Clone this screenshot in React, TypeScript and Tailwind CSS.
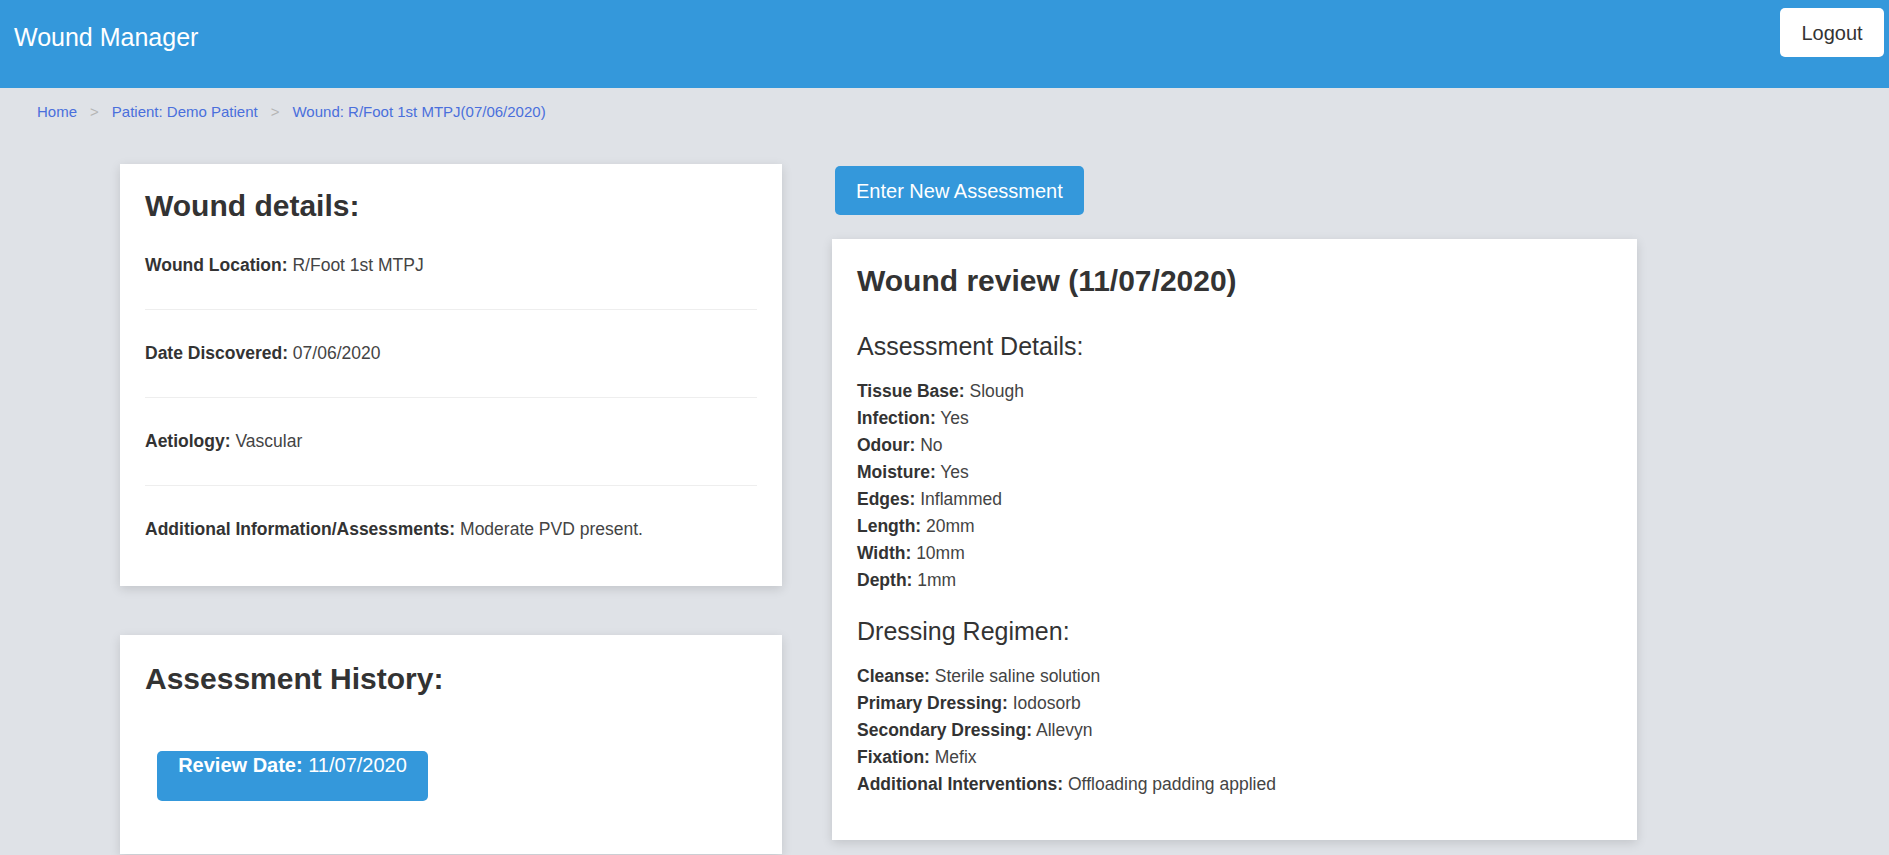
const wound = [
  { label: "Wound Location:", value: "R/Foot 1st MTPJ" },
  { label: "Date Discovered:", value: "07/06/2020" },
  { label: "Aetiology:", value: "Vascular" },
  { label: "Additional Information/Assessments:", value: "Moderate PVD present." },
];

const assessment = [
  { label: "Tissue Base:", value: "Slough" },
  { label: "Infection:", value: "Yes" },
  { label: "Odour:", value: "No" },
  { label: "Moisture:", value: "Yes" },
  { label: "Edges:", value: "Inflammed" },
  { label: "Length:", value: "20mm" },
  { label: "Width:", value: "10mm" },
  { label: "Depth:", value: "1mm" },
];

const dressing = [
  { label: "Cleanse:", value: "Sterile saline solution" },
  { label: "Primary Dressing:", value: "Iodosorb" },
  { label: "Secondary Dressing:", value: "Allevyn" },
  { label: "Fixation:", value: "Mefix" },
  { label: "Additional Interventions:", value: "Offloading padding applied" },
];

const crumbs = ["Home", "Patient: Demo Patient", "Wound: R/Foot 1st MTPJ(07/06/2020)"];

function Field({ label, value }: { label: string; value: string }) {
  return (
    <div>
      <span className="font-bold text-[#333]">{label}</span>{" "}
      <span className="text-[#444]">{value}</span>
    </div>
  );
}

export default function App() {
  return (
    <div className="min-h-[855px] bg-[#dfe2e7] font-['Liberation_Sans',Arial,sans-serif] text-[#333]">
      <header className="h-[88px] bg-[#3498db] flex items-start justify-between pl-[14px] pr-[5px]">
        <h1 className="mt-[22px] text-[25px] leading-[30px] text-white">Wound Manager</h1>
        <button className="mt-[8px] w-[104px] h-[49px] bg-white rounded-[5px] text-[20px] text-[#333]">
          Logout
        </button>
      </header>

      {/* breadcrumbs */}
      <nav className="pt-[14px] pl-[37px] flex items-center text-[15px] leading-[20px]">
        {crumbs.map((c, i) => (
          <div key={c} className="flex items-center">
            {i > 0 && <span className="px-[13px] text-[#b5b5b5]">&gt;</span>}
            <a className="text-[#4a6fdc]">{c}</a>
          </div>
        ))}
      </nav>

      <main className="flex items-start gap-[50px] pl-[120px] pt-[42px]">
        {/* left column */}
        <div className="w-[662px] flex flex-col gap-[49px]">
          <section className="bg-white shadow-[0_3px_10px_rgba(0,0,0,0.13)] px-[25px] pt-[25px] pb-[13px]">
            <h2 className="text-[30px] leading-[33px] font-bold text-[#333]">Wound details:</h2>
            <div className="text-[17.5px] leading-[26px]">
              {wound.map((w, i) => (
                <div
                  key={w.label}
                  className={
                    "pt-[30px] pb-[31px] " + (i < wound.length - 1 ? "border-b border-[#eeeeee]" : "")
                  }
                >
                  <Field label={w.label} value={w.value} />
                </div>
              ))}
            </div>
          </section>

          <section className="bg-white shadow-[0_3px_10px_rgba(0,0,0,0.13)] px-[25px] pt-[27px] pb-[53px]">
            <h2 className="text-[30px] leading-[33px] font-bold text-[#333]">Assessment History:</h2>
            <button className="mt-[56px] ml-[12px] w-[271px] h-[50px] bg-[#3498db] rounded-[5px] text-white text-[20px] leading-[24px] flex justify-center items-start pt-[2px]">
              <span>
                <span className="font-bold">Review Date:</span> 11/07/2020
              </span>
            </button>
          </section>
        </div>

        {/* right column */}
        <div className="w-[805px] flex flex-col items-start">
          <button className="mt-[2px] ml-[3px] h-[49px] px-[21px] bg-[#3498db] rounded-[5px] text-white text-[20px]">
            Enter New Assessment
          </button>
          <section className="mt-[24px] w-full bg-white shadow-[0_3px_10px_rgba(0,0,0,0.13)] px-[25px] pt-[25px] pb-[42px]">
            <h2 className="text-[30px] leading-[33px] font-bold text-[#333]">Wound review (11/07/2020)</h2>
            <h3 className="mt-[34px] text-[25px] leading-[30px] text-[#333]">Assessment Details:</h3>
            <div className="mt-[17px] text-[17.5px] leading-[27px]">
              {assessment.map((a) => (
                <Field key={a.label} label={a.label} value={a.value} />
              ))}
            </div>
            <h3 className="mt-[22px] text-[25px] leading-[30px] text-[#333]">Dressing Regimen:</h3>
            <div className="mt-[17px] text-[17.5px] leading-[27px]">
              {dressing.map((d) => (
                <Field key={d.label} label={d.label} value={d.value} />
              ))}
            </div>
          </section>
        </div>
      </main>
    </div>
  );
}
